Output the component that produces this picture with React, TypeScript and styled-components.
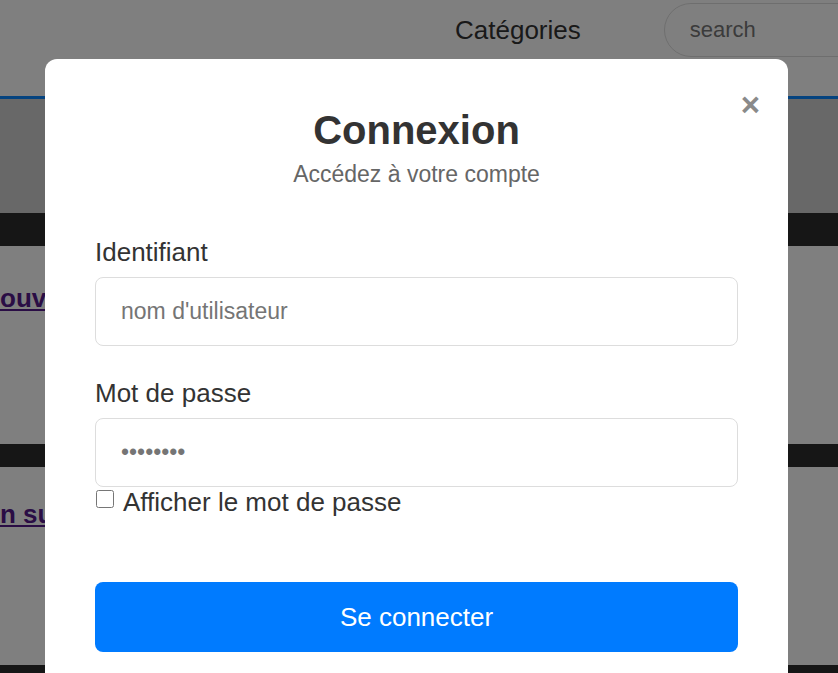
import React from 'react';
import styled, { createGlobalStyle } from 'styled-components';

const GlobalStyle = createGlobalStyle`
  html, body {
    margin: 0;
    padding: 0;
  }
  body {
    font-family: "Liberation Sans", Arial, sans-serif;
    background: #fff;
    overflow: hidden;
  }
`;

const Page = styled.div`
  height: 673px;
  overflow: hidden;
`;

const Header = styled.header`
  height: 93px;
  border-bottom: 3px solid #0a86ff;
  display: flex;
  align-items: flex-start;
  gap: 83px;
  padding: 3px 0 0 455px;
  overflow: hidden;
`;

const NavItem = styled.span`
  font-size: 26px;
  line-height: 54px;
  color: #333;
`;

const Search = styled.input`
  flex-shrink: 0;
  width: 260px;
  height: 54px;
  box-sizing: border-box;
  border: 1px solid #ddd;
  border-radius: 27px;
  padding: 0 25px;
  font-family: inherit;
  font-size: 22px;
  outline: none;
  &::placeholder {
    color: #777;
  }
`;

const Band = styled.div<{ h: number; bg: string }>`
  height: ${({ h }) => h}px;
  background: ${({ bg }) => bg};
`;

const Section = styled.section<{ top: number }>`
  height: 198px;
  box-sizing: border-box;
  padding-top: ${({ top }) => top}px;
  background: #fff;
`;

const HeadLink = styled.a`
  font-size: 26px;
  font-weight: bold;
  color: #551a8b;
  text-decoration: underline;
  white-space: nowrap;
`;

const Overlay = styled.div`
  position: fixed;
  inset: 0;
  background: rgba(0, 0, 0, 0.5);
  padding: 59px 0 0 45px;
  box-sizing: border-box;
`;

const Modal = styled.div`
  position: relative;
  width: 743px;
  height: 700px;
  box-sizing: border-box;
  background: #fff;
  border-radius: 12px;
  padding: 49px 50px 0;
`;

const Close = styled.button`
  position: absolute;
  top: 29px;
  right: 28px;
  border: none;
  background: none;
  padding: 0;
  font-family: "Liberation Sans", Arial, sans-serif;
  font-size: 33px;
  font-weight: bold;
  line-height: 1;
  color: #8a8a8a;
  cursor: pointer;
`;

const Title = styled.h1`
  margin: 0;
  text-align: center;
  font-size: 40px;
  font-weight: bold;
  color: #333;
`;

const Subtitle = styled.p`
  margin: 8px 0 49px;
  text-align: center;
  font-size: 23px;
  color: #666;
`;

const Field = styled.div`
  display: flex;
  flex-direction: column;
  gap: 9px;
  margin-bottom: 32px;
  &:last-of-type {
    margin-bottom: 0;
  }
`;

const Label = styled.label`
  font-size: 26px;
  color: #333;
`;

const Input = styled.input`
  height: 69px;
  box-sizing: border-box;
  border: 1px solid #ddd;
  border-radius: 8px;
  padding: 0 25px;
  font-family: inherit;
  font-size: 23px;
  color: #333;
  outline: none;
  &::placeholder {
    color: #757575;
  }
`;

const CheckRow = styled.label`
  display: flex;
  align-items: flex-start;
  font-size: 26px;
  color: #333;
`;

const Check = styled.input`
  width: 18px;
  height: 18px;
  margin: 3px 9px 0 1px;
`;

const Submit = styled.button`
  margin-top: 64px;
  width: 100%;
  height: 70px;
  border: none;
  border-radius: 8px;
  background: #007bff;
  color: #fff;
  font-family: inherit;
  font-size: 26px;
  cursor: pointer;
`;

const App: React.FC = () => {
  return (
    <>
      <GlobalStyle />
      <Page>
        <Header>
          <NavItem>Catégories</NavItem>
          <Search placeholder="search" />
        </Header>
        <Band h={114} bg="#d0d0d0" />
        <Band h={33} bg="#2c2c2c" />
        <Section top={37}>
          <HeadLink href="#">ouvert</HeadLink>
        </Section>
        <Band h={23} bg="#2c2c2c" />
        <Section top={32}>
          <HeadLink href="#">n sur</HeadLink>
        </Section>
        <Band h={20} bg="#2c2c2c" />
      </Page>
      <Overlay>
        <Modal>
          <Close aria-label="Fermer">×</Close>
          <Title>Connexion</Title>
          <Subtitle>Accédez à votre compte</Subtitle>
          <Field>
            <Label htmlFor="user">Identifiant</Label>
            <Input id="user" placeholder="nom d'utilisateur" />
          </Field>
          <Field>
            <Label htmlFor="pass">Mot de passe</Label>
            <Input id="pass" type="password" placeholder="••••••••" />
          </Field>
          <CheckRow>
            <Check type="checkbox" />
            Afficher le mot de passe
          </CheckRow>
          <Submit>Se connecter</Submit>
        </Modal>
      </Overlay>
    </>
  );
};

export default App;
